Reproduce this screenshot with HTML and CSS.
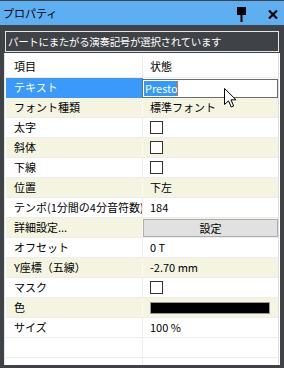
FILE: index.html
```html
<!DOCTYPE html>
<html lang="ja">
<head>
<meta charset="utf-8">
<title>プロパティ</title>
<link rel="stylesheet" href="styles.css">
</head>
<body>
<div class="panel">
  <div class="titlebar">
    <span class="title">プロパティ</span>
    <span class="tools">
      <svg class="pin" width="9" height="15" viewBox="0 0 9 15"><rect x="0" y="0" width="9" height="8" fill="#000"/><rect x="3.5" y="8" width="2" height="7" fill="#000"/></svg>
      <svg class="close" width="10" height="9" viewBox="0 0 10 9"><path d="M1 0.5 L9 8.5 M9 0.5 L1 8.5" stroke="#000" stroke-width="2.2"/></svg>
    </span>
  </div>
  <div class="message">パートにまたがる演奏記号が選択されています</div>
  <div class="grid">
    <div class="rows">
      <div class="row head"><div class="k">項目</div><div class="v">状態</div></div>
      <div class="row sel"><div class="k">テキスト</div><div class="v"><div class="edit"><span class="hl">Presto</span><span class="caret"></span></div></div></div>
      <div class="row alt"><div class="k">フォント種類</div><div class="v">標準フォント</div></div>
      <div class="row"><div class="k">太字</div><div class="v"><span class="chk"></span></div></div>
      <div class="row alt"><div class="k">斜体</div><div class="v"><span class="chk"></span></div></div>
      <div class="row"><div class="k">下線</div><div class="v"><span class="chk"></span></div></div>
      <div class="row alt"><div class="k">位置</div><div class="v">下左</div></div>
      <div class="row"><div class="k">テンポ(1分間の4分音符数)</div><div class="v">184</div></div>
      <div class="row alt"><div class="k">詳細設定...</div><div class="v btncell"><div class="btn">設定</div></div></div>
      <div class="row"><div class="k">オフセット</div><div class="v">0 T</div></div>
      <div class="row alt"><div class="k">Y座標（五線）</div><div class="v">-2.70 mm</div></div>
      <div class="row"><div class="k">マスク</div><div class="v"><span class="chk"></span></div></div>
      <div class="row alt"><div class="k">色</div><div class="v"><span class="swatch"></span></div></div>
      <div class="row"><div class="k">サイズ</div><div class="v">100 %</div></div>
      <div class="row"><div class="k"></div><div class="v"></div></div>
      <div class="row"><div class="k"></div><div class="v"></div></div>
    </div>
    <div class="vbar"></div>
  </div>
  <svg class="cursor" width="13" height="20" viewBox="0 0 13 20"><path d="M0.5 0.5 L0.5 16.5 L4.5 12.8 L7.2 19 L9.6 18 L7 11.8 L12 11.8 Z" fill="#fff" stroke="#000" stroke-width="1" stroke-linejoin="miter"/></svg>
</div>
</body>
</html>
```

FILE: styles.css
```css
* { box-sizing: border-box; }
html, body { margin: 0; padding: 0; }
body {
  width: 284px;
  height: 368px;
  overflow: hidden;
  background: #3f4246;
  font-family: "Noto Sans CJK JP", "Noto Sans", sans-serif;
  font-size: 11px;
  color: #000;
}
.panel {
  position: relative;
  width: 284px;
  height: 368px;
  padding-top: 1px;
}
.titlebar {
  height: 24px;
  background: #5eaff2;
  display: flex;
  align-items: center;
  justify-content: space-between;
  padding: 0 6px 0 3px;
}
.title {
  font-size: 11px;
  line-height: 1;
  margin-top: 1px;
}
.tools {
  display: flex;
  align-items: center;
  gap: 22px;
}
.pin { display: block; margin-top: 2px; }
.close { display: block; margin-top: 2px; }
.message {
  margin: 6px 5px 0 5px;
  height: 21px;
  border: 1px solid #e6e6e6;
  color: #fff;
  font-size: 10.5px;
  letter-spacing: -0.33px;
  line-height: 19px;
  padding-left: 2px;
  white-space: nowrap;
  overflow: hidden;
}
.grid {
  margin: 1px 4px 0 4px;
  height: 312px;
  background: #fff;
  border-left: 1px solid #e4e4e4;
  padding-left: 1px;
  display: flex;
  overflow: hidden;
}
.rows {
  flex: 1;
  display: flex;
  flex-direction: column;
}
.vbar {
  width: 2px;
  border-left: 1px solid #dedede;
  background: #fff;
}
.row {
  display: grid;
  grid-template-columns: 137px 1fr;
  height: 20px;
  flex: none;
  border-bottom: 1px solid #ededed;
  line-height: 19px;
}
.row.head {
  height: 25px;
  align-items: end;
}
.row.alt { background: #f4f4e1; }
.k {
  padding-left: 8px;
  border-right: 1px solid #ececec;
  white-space: nowrap;
  overflow: hidden;
  height: 100%;
}
.row.head .k, .row.head .v { height: auto; line-height: 22px; }
.v {
  padding-left: 7px;
  white-space: nowrap;
  overflow: hidden;
  display: flex;
  align-items: center;
}
.row.alt .k { border-right-color: #fbfbf3; }
.row.sel .k {
  background: #3b99fc;
  color: #fff;
  border-right-color: #3b99fc;
}
.row.sel .v {
  padding-left: 0;
  overflow: visible;
}
.edit {
  margin-left: -1px;
  margin-top: 1px;
  width: 136px;
  height: 19px;
  border: 1px solid #6b6b6b;
  background: #fff;
  display: flex;
  align-items: center;
  padding-left: 1px;
}
.hl {
  background: #3399ff;
  color: #fff;
  height: 15px;
  line-height: 15px;
  padding: 0 1px;
  width: 33px;
}
.caret {
  width: 1px;
  height: 15px;
  background: #e5750a;
}
.chk {
  display: block;
  width: 13px;
  height: 13px;
  border: 1px solid #333;
  background: #fff;
}
.btncell { padding: 1px 0 0 0; align-items: flex-start; overflow: visible; }
.btn {
  width: 135px;
  height: 18px;
  background: #e1e1e1;
  border: 1px solid #adadad;
  text-align: center;
  line-height: 16px;
}
.swatch {
  display: block;
  width: 120px;
  height: 12px;
  background: #000;
  border: 1px solid #999;
}
.cursor {
  position: absolute;
  left: 224px;
  top: 88px;
}
```
